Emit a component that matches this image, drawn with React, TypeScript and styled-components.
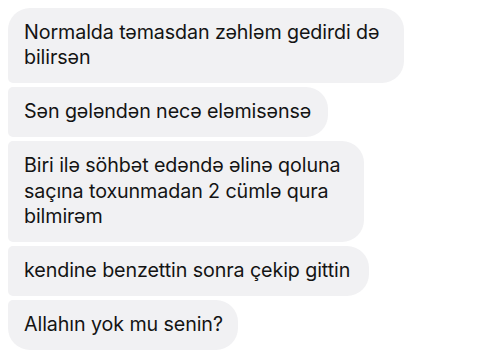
import React from "react";
import styled, { createGlobalStyle } from "styled-components";

const Global = createGlobalStyle`
  html, body { margin: 0; padding: 0; background: #ffffff; }
  body { font-family: Inter, "Noto Sans", "Liberation Sans", sans-serif; }
`;

const Thread = styled.div`
  display: flex;
  flex-direction: column;
  align-items: flex-start;
  gap: 4.5px;
  padding: 7.5px 8px 0 8px;
`;

type Pos = "first" | "middle" | "last";

const Bubble = styled.div<{ $pos: Pos; $w: number }>`
  box-sizing: border-box;
  width: ${(p) => p.$w}px;
  padding: 12px 16px;
  background: #f1f1f3;
  color: #141414;
  font-size: 19.7px;
  line-height: 25.5px;
  letter-spacing: -0.1px;
  white-space: nowrap;
  border-radius: ${(p) =>
    p.$pos === "first"
      ? "22px 22px 22px 5px"
      : p.$pos === "last"
      ? "5px 22px 22px 22px"
      : "5px 22px 22px 5px"};
`;

const messages: { text: string[]; w: number }[] = [
  { text: ["Normalda təmasdan zəhləm gedirdi də", "bilirsən"], w: 396 },
  { text: ["Sən gələndən necə eləmisənsə"], w: 320 },
  {
    text: ["Biri ilə söhbət edəndə əlinə qoluna", "saçına toxunmadan 2 cümlə qura", "bilmirəm"],
    w: 356,
  },
  { text: ["kendine benzettin sonra çekip gittin"], w: 361 },
  { text: ["Allahın yok mu senin?"], w: 230 },
];

export default function App() {
  return (
    <>
      <Global />
      <Thread>
        {messages.map((m, i) => (
          <Bubble
            key={i}
            $w={m.w}
            $pos={i === 0 ? "first" : i === messages.length - 1 ? "last" : "middle"}
          >
            {m.text.map((l, j) => (
              <React.Fragment key={j}>
                {j > 0 && <br />}
                {l}
              </React.Fragment>
            ))}
          </Bubble>
        ))}
      </Thread>
    </>
  );
}
